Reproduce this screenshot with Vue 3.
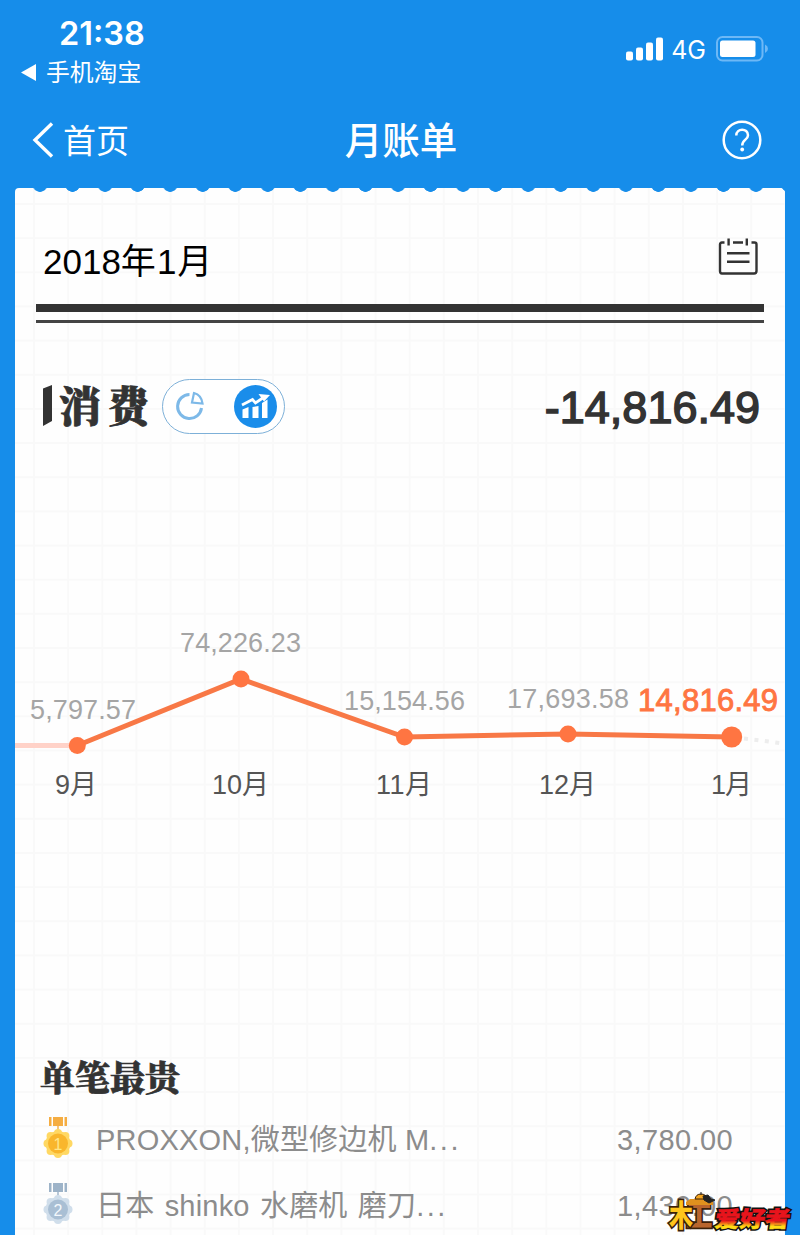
<template>
  <div class="page">
    <div class="status-bar">
      <div class="status-left">
        <div class="clock">21:38</div>
        <div class="back-app">
          <svg width="15" height="17" viewBox="0 0 15 17"><path d="M0 8.5L15 0V17Z" fill="#fff" /></svg>
          <span>手机淘宝</span>
        </div>
      </div>
      <div class="status-right">
        <svg class="signal" width="38" height="24" viewBox="0 0 38 24" fill="#fff">
          <rect x="0" y="14.500" width="7" height="9" rx="2" />
          <rect x="10" y="10.500" width="7" height="13" rx="2" />
          <rect x="20" y="5.500" width="7" height="18" rx="2" />
          <rect x="30" y="0.500" width="7" height="23" rx="2" />
        </svg>
        <span class="network">4G</span>
        <svg class="battery" width="53" height="26" viewBox="0 0 53 26">
          <rect x="1" y="1" width="45.500" height="23.500" rx="5.500" fill="none" stroke="#6db8f6" stroke-width="2" />
          <rect x="4" y="4.500" width="35.500" height="16.500" rx="2.500" fill="#fff" />
          <path d="M49 8.500Q52 10 52 12.700T49 17Z" fill="#6db8f6" />
        </svg>
      </div>
    </div>

    <div class="nav-bar">
      <div class="nav-back">
        <svg width="22" height="36" viewBox="0 0 22 36"><path d="M20 1.500L3 18L20 34.500" fill="none" stroke="#fff" stroke-width="3.400" /></svg>
        <span>首页</span>
      </div>
      <div class="nav-title">月账单</div>
      <svg class="nav-help" width="40" height="40" viewBox="0 0 40 40" fill="none" stroke="#fff">
        <circle cx="20" cy="20" r="18.300" stroke-width="2.500" />
        <path d="M14.300 15.500C14.300 7.800 26 7.800 26 15.200C26 19.800 20.200 19.500 20.200 25.500" stroke-width="2.500" />
        <circle cx="20.200" cy="29.500" r="1.900" fill="#fff" stroke="none" />
      </svg>
    </div>

    <div class="card">
      <div class="date-row">
        <span class="date">2018年<span class="date-month">1月</span></span>
        <svg width="40" height="38" viewBox="0 0 40 38" fill="none" stroke="#333" stroke-width="2.400">
          <path d="M6.500 5.500H4Q2 5.500 2 7.500V34Q2 36.500 4 36.500H36Q38.500 36.500 38.500 34V7.500Q38.500 5.500 36.500 5.500H33.500" />
          <path d="M10.600 1.500V8.500M28.800 1.500V8.500M15 5.500H25M9 16.300H31.500M9 24.800H31.500" />
        </svg>
      </div>
      <div class="rules"></div>

      <div class="summary">
        <svg class="mark" width="10" height="42" viewBox="0 0 10 42"><path d="M1 3.500L10 0V36L1 41Z" fill="#333" /></svg>
        <span class="summary-title">消费</span>
        <div class="switch">
          <svg class="pie" width="32" height="32" viewBox="0 0 32 32" fill="none" stroke="#7db9e8" stroke-width="3">
            <path d="M15.500 4.500A12 12 0 1 0 27.500 18" />
            <path d="M20 3L18 12.500L28.500 13.500Q27.500 5 20 3Z" stroke-width="2.200" />
          </svg>
          <svg width="43" height="43" viewBox="0 0 43 43">
            <circle cx="21.500" cy="21.500" r="21.500" fill="#1a8dea" />
            <path d="M8.500 24.500L14.500 22V33H8.500ZM18.500 22L24.500 21V33H18.500ZM28 18L33.500 14.500V33H28Z" fill="#fff" />
            <path d="M8 20L18.500 14.500L21.500 18L31 11.500" fill="none" stroke="#fff" stroke-width="2.800" />
            <path d="M24.500 9L36 10L30 16.500Z" fill="#fff" />
          </svg>
        </div>
        <span class="total">-14,816.49</span>
      </div>

      <svg class="chart" width="770" height="220" viewBox="15 600 770 220">
        <path d="M15 745.500H77" stroke="#ffd2c8" stroke-width="5" />
        <path d="M744 738.500L780 743" stroke="#ededed" stroke-width="4" stroke-dasharray="4 6.500" />
        <polyline :points="linePoints" fill="none" stroke="#f87846" stroke-width="5" />
        <g v-for="item in months" :key="item.label">
          <circle :cx="item.x" :cy="item.y" :r="item.active ? 10.5 : 8.5" fill="#ff7542" />
          <text
            :x="item.textX" :y="item.textY" :textLength="item.textWidth"
            :class="item.active ? 'value value-active' : 'value'"
          >{{ item.value }}</text>
          <text :x="item.labelX" y="794" :textLength="item.labelWidth" class="month">{{ item.label }}</text>
        </g>
      </svg>

      <div class="ranking">
        <div class="ranking-title">单笔最贵</div>
        <div v-for="row in ranking" :key="row.no" class="ranking-row">
          <svg class="medal" width="30" height="42" viewBox="0 0 30 42">
            <path d="M6 0H8.500V9H6ZM10 0H20V9H10ZM21.500 0H24V9H21.500ZM14.300 9H15.700V14H14.300Z" :fill="row.ribbon" />
            <circle v-for="n in 8" :key="n" :cx="15 + 10.5 * Math.cos(n * Math.PI / 4)" :cy="26.5 + 10.5 * Math.sin(n * Math.PI / 4)" r="4" :fill="row.edge" />
            <circle cx="15" cy="26.500" r="12.500" :fill="row.edge" />
            <circle cx="15" cy="26.500" r="10" :fill="row.face" />
            <text x="15" y="32.500" text-anchor="middle" class="medal-no" :fill="row.digit">{{ row.no }}</text>
          </svg>
          <span class="goods" :class="row.no === 2 ? 'goods-wide' : ''">{{ row.name }}<span class="dots">...</span></span>
          <span class="price">{{ row.price }}</span>
        </div>
      </div>
    </div>

    <svg class="watermark" width="128" height="44" viewBox="666 1190 128 44">
      <defs>
        <linearGradient id="fansFill" x1="0" y1="0" x2="0" y2="1">
          <stop offset="0.550" stop-color="#e8141c" />
          <stop offset="0.780" stop-color="#ffdc14" />
        </linearGradient>
      </defs>
      <text transform="translate(686 1226) scale(0.88 1)" class="wood wood-brown">工</text>
      <path d="M686 1202L690 1199L711 1199L713 1202V1205H686Z" fill="#e0911e" />
      <text transform="translate(669 1226) scale(0.8 1)" class="wood wood-yellow">木</text>
      <path d="M695 1199Q696 1194 701 1194Q706 1194 707 1199Z" fill="#f5a51f" stroke="#3b2109" />
      <path d="M701 1192V1195M703 1196L708 1195L711 1199L715 1200L709 1203L704 1200Z" fill="#222" stroke="#222" />
      <text transform="translate(714 1227) skewX(-8) scale(1 0.88)" class="fans fans-outer">爱好者</text>
      <text transform="translate(714 1227) skewX(-8) scale(1 0.88)" class="fans fans-inner">爱好者</text>
    </svg>
  </div>
</template>

<script setup>
import { computed } from 'vue'

const months = [
  { label: '9月', value: '5,797.57', x: 77.3, y: 745.5, textX: 30, textY: 719, textWidth: 106, labelX: 55, labelWidth: 42 },
  { label: '10月', value: '74,226.23', x: 241, y: 679, textX: 180, textY: 652, textWidth: 121, labelX: 212, labelWidth: 57 },
  { label: '11月', value: '15,154.56', x: 404.5, y: 737, textX: 344, textY: 709.5, textWidth: 121, labelX: 376, labelWidth: 56 },
  { label: '12月', value: '17,693.58', x: 568, y: 734, textX: 507, textY: 707.5, textWidth: 122, labelX: 539, labelWidth: 57 },
  { label: '1月', value: '14,816.49', x: 731.7, y: 737, textX: 638, textY: 711, textWidth: 140, labelX: 711, labelWidth: 41, active: true }
]

const ranking = [
  { no: 1, name: 'PROXXON,微型修边机 M', price: '3,780.00', ribbon: '#f5ad42', edge: '#ffd863', face: '#f9b62c', digit: '#ffe788' },
  { no: 2, name: '日本 shinko 水磨机 磨刀', price: '1,430.00', ribbon: '#9db3c8', edge: '#d0deeb', face: '#a9bfd4', digit: '#f3f8fc' }
]

const linePoints = computed(() => months.map((item) => `${item.x},${item.y}`).join(' '))
</script>

<style>
body {
  margin: 0;
  background: #fff;
}
</style>

<style scoped>
.page {
  position: relative;
  box-sizing: border-box;
  width: 800px;
  height: 1235px;
  overflow: hidden;
  background: #168dea;
  font-family: "Liberation Sans", "Noto Sans CJK SC", sans-serif;
  color: #fff;
}

.status-bar {
  display: flex;
  justify-content: space-between;
  height: 94px;
}

.status-left {
  padding: 14px 0 0 21px;
}

.clock {
  padding-left: 38px;
  font-family: Inter, sans-serif;
  font-size: 32.5px;
  font-weight: 600;
  line-height: 40px;
}

.back-app {
  display: flex;
  align-items: center;
  gap: 10px;
  height: 36px;
  font-size: 23.8px;
}

.back-app span {
  margin-top: -3px;
}

.status-right {
  display: flex;
  align-items: center;
  height: 98px;
  padding-right: 31px;
}

.signal {
  margin-right: -3px;
}

.network {
  margin: 1px 10px 0;
  font-family: Inter, sans-serif;
  font-size: 25px;
}

.nav-bar {
  display: grid;
  grid-template-columns: 1fr auto 1fr;
  align-items: center;
  box-sizing: border-box;
  height: 94px;
  padding: 0 38px 2px 32px;
}

.nav-back {
  display: flex;
  align-items: center;
  gap: 9px;
  font-size: 33px;
}

.nav-back span {
  margin-top: -2px;
}

.nav-title {
  padding: 0 0 6px 8px;
  font-size: 37.5px;
  font-weight: 500;
}

.nav-help {
  justify-self: end;
}

.card {
  box-sizing: border-box;
  height: 1047px;
  margin: 0 15px;
  padding: 0 21px;
  border-radius: 4px 4px 0 0;
  color: #333;
  background-color: #fefefe;
  background-image:
    radial-gradient(circle at 16.3px -3.500px, #168dea 7px, transparent 7.600px),
    linear-gradient(to right, #f9f9f9 1.500px, transparent 1.500px),
    linear-gradient(to bottom, #f9f9f9 1.500px, transparent 1.500px);
  background-size: 32.55px 8px, 34.17px 34.17px, 34.17px 34.17px;
  background-position: 8.700px 0, 18px 0, 0 15px;
  background-repeat: repeat-x, repeat, repeat;
}

.date-row {
  display: flex;
  align-items: center;
  justify-content: space-between;
  height: 116px;
  padding: 0 6px 0 7px;
}

.date-row svg {
  margin-top: 20px;
}

.date {
  margin-top: 24px;
  color: #000;
  font-size: 35px;
}

.date-month {
  margin-left: 1px;
  letter-spacing: 1px;
}

.rules {
  height: 8px;
  border-top: 8px solid #333;
  border-bottom: 3px solid #444;
}

.summary {
  display: flex;
  align-items: center;
  height: 166px;
  padding: 0 4px 0 6px;
}

.summary-title {
  margin: -4px 0 0 7px;
  font-family: "Noto Serif CJK SC", "Noto Sans CJK SC", serif;
  font-size: 42px;
  font-weight: 900;
  letter-spacing: 6.5px;
  -webkit-text-stroke: 0.8px #333;
}

.switch {
  display: flex;
  align-items: center;
  justify-content: space-between;
  box-sizing: border-box;
  width: 123px;
  height: 55px;
  margin-left: 6px;
  padding: 0 7px 0 11px;
  border: 1px solid #7db0d8;
  border-radius: 28px;
  background: #fff;
}

.total {
  margin: 4px 0 0 auto;
  font-size: 45px;
  -webkit-text-stroke: 1.5px #333;
}

.chart {
  display: block;
  margin: 111px -21px 0;
}

.value {
  fill: #a5a5a5;
  font-size: 27px;
}

.value-active {
  fill: #ff7542;
  stroke: #ff7542;
  stroke-width: 0.9px;
  font-size: 31px;
}

.month {
  fill: #555;
  font-size: 27px;
}

.ranking {
  padding: 232px 31px 0 6px;
}

.ranking-title {
  height: 54px;
  margin-left: -2px;
  font-family: "Noto Serif CJK SC", "Noto Sans CJK SC", serif;
  font-size: 35px;
  font-weight: 900;
  line-height: 48px;
  -webkit-text-stroke: 0.7px #333;
}

.ranking-row {
  display: flex;
  align-items: center;
  height: 66px;
  color: #8c8c8c;
  font-size: 29px;
  white-space: nowrap;
}

.medal {
  margin: -2px 23px 0 1px;
}

.medal-no {
  font-size: 16px;
}

.goods {
  margin-top: -4px;
  letter-spacing: 0.2px;
}

.goods-wide {
  word-spacing: 2px;
}

.dots {
  letter-spacing: 2.5px;
}

.price {
  margin: 3px 0 0 auto;
  letter-spacing: 0.4px;
}

.watermark {
  position: absolute;
  left: 666px;
  top: 1190px;
}

.wood {
  font-size: 30px;
  font-weight: 900;
  stroke: #3b2109;
  stroke-width: 3.5px;
  paint-order: stroke;
}

.wood-yellow {
  fill: #ffc51c;
}

.wood-brown {
  fill: #b9652d;
}

.fans {
  font-size: 25px;
  font-weight: 900;
}

.fans-outer {
  fill: #111;
  stroke: #111;
  stroke-width: 4px;
}

.fans-inner {
  fill: url(#fansFill);
  stroke: url(#fansFill);
  stroke-width: 0.6px;
}
</style>
